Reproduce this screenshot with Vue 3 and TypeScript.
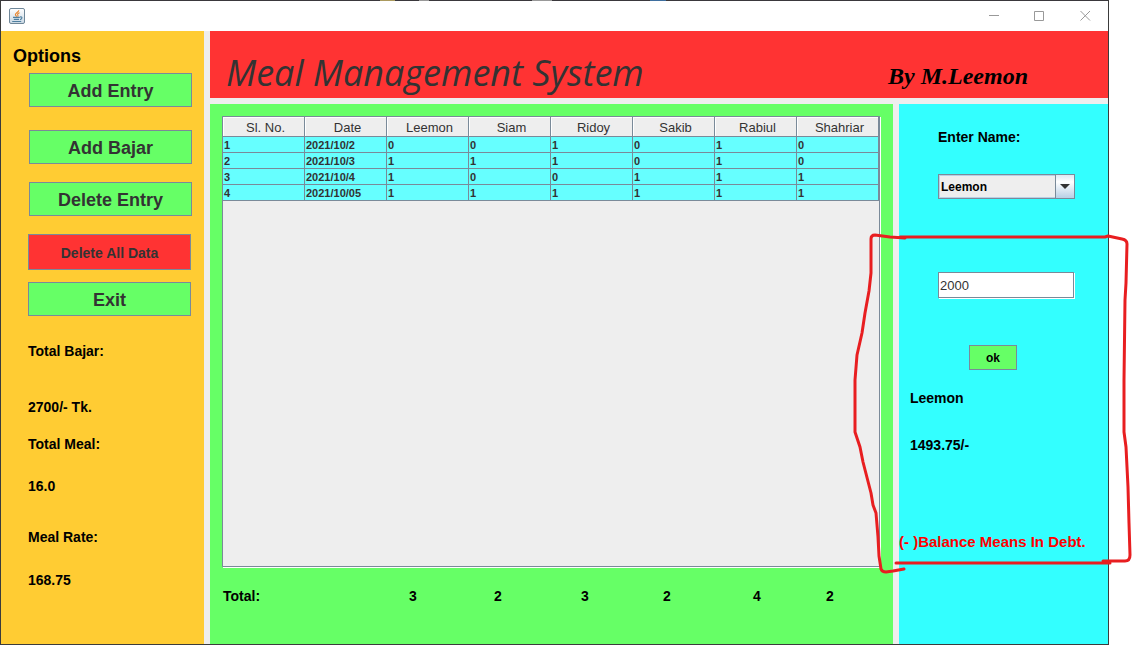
<script setup lang="ts">
import { ref } from 'vue'

const columns: string[] = ['Sl. No.', 'Date', 'Leemon', 'Siam', 'Ridoy', 'Sakib', 'Rabiul', 'Shahriar']

const rows: string[][] = [
  ['1', '2021/10/2', '0', '0', '1', '0', '1', '0'],
  ['2', '2021/10/3', '1', '1', '1', '0', '1', '0'],
  ['3', '2021/10/4', '1', '0', '0', '1', '1', '1'],
  ['4', '2021/10/05', '1', '1', '1', '1', '1', '1'],
]

const totals: number[] = [3, 2, 3, 2, 4, 2]
const members = columns.slice(2)

const member = ref('Leemon')
const amount = ref('2000')
</script>

<template>
  <div class="page">
    <div class="window">
      <div class="edge"></div>
      <header class="titlebar">
        <svg class="java" viewBox="0 0 16 16" aria-hidden="true">
          <defs>
            <linearGradient id="tile" x1="0" y1="0" x2="0" y2="1">
              <stop offset="0" stop-color="#ffffff" />
              <stop offset="1" stop-color="#c9d8e4" />
            </linearGradient>
          </defs>
          <rect x="0.5" y="0.5" width="15" height="15" rx="1.5" fill="url(#tile)" stroke="#6f8799" />
          <path d="M9.8 2.3C10 4 6.2 5 6.4 6.6C6.5 7.5 7.5 7.8 7.6 8.7M10.6 4.8C8.6 5.4 8.2 6.2 8.9 7.2C9.2 7.7 9 8.2 8.6 8.7" fill="none" stroke="#e8842c" stroke-width="1.1" />
          <path d="M4 9.4H10.8M4.8 11.4H10M11 9C13.6 8.4 13.6 11 11 11.6M3.2 13.5H12.2" fill="none" stroke="#4f7f9f" stroke-width="1.1" />
        </svg>
        <div class="controls">
          <button type="button" aria-label="Minimize">
            <svg viewBox="0 0 11 11"><path d="M1 4.5H11" /></svg>
          </button>
          <button type="button" aria-label="Maximize">
            <svg viewBox="0 0 11 11"><path d="M0.5 0.5H9.5V9.5H0.5Z" /></svg>
          </button>
          <button type="button" aria-label="Close">
            <svg viewBox="0 0 11 11"><path d="M0.5 0L10 9.5M10 0L0.5 9.5" /></svg>
          </button>
        </div>
      </header>

      <div class="body">
        <aside class="sidebar">
          <h2>Options</h2>
          <nav class="actions">
            <button type="button" class="entry first">Add Entry</button>
            <button type="button" class="entry">Add Bajar</button>
            <button type="button" class="entry">Delete Entry</button>
            <button type="button" class="danger">Delete All Data</button>
            <button type="button">Exit</button>
          </nav>
          <dl class="stats">
            <dt>Total Bajar:</dt>
            <dd>2700/- Tk.</dd>
            <dt>Total Meal:</dt>
            <dd>16.0</dd>
            <dt>Meal Rate:</dt>
            <dd>168.75</dd>
          </dl>
        </aside>

        <main class="main">
          <div class="banner">
            <h1>Meal Management System</h1>
            <p>By M.Leemon</p>
          </div>

          <div class="panels">
            <section class="sheet">
              <div class="pane">
                <table>
                  <thead>
                    <tr>
                      <th v-for="name in columns" :key="name" scope="col">{{ name }}</th>
                    </tr>
                  </thead>
                  <tbody>
                    <tr v-for="row in rows" :key="row[0]">
                      <td v-for="(cell, i) in row" :key="i">{{ cell }}</td>
                    </tr>
                  </tbody>
                </table>
              </div>
              <div class="totals">
                <span>Total:</span>
                <span v-for="(total, i) in totals" :key="i">{{ total }}</span>
              </div>
            </section>

            <form class="balance" @submit.prevent>
              <label for="member">Enter Name:</label>
              <div class="combo">
                <select id="member" v-model="member">
                  <option v-for="name in members" :key="name">{{ name }}</option>
                </select>
                <span class="arrow" aria-hidden="true">
                  <svg viewBox="0 0 10 5"><path d="M0 0H10L5 5Z" /></svg>
                </span>
              </div>
              <input v-model="amount" type="text" aria-label="Amount" />
              <button type="submit">ok</button>
              <output class="who" for="member">Leemon</output>
              <output class="sum">1493.75/-</output>
              <p class="note">(- )Balance Means In Debt.</p>
            </form>
          </div>
        </main>
      </div>
    </div>

    <svg class="marker" viewBox="0 0 1132 645" preserveAspectRatio="none" aria-hidden="true">
      <path d="M905 238L890 237L875 235Q871 235 871 239L871 273L869 291L865 313L862 333L857 355L855 380L855 432L860 447L863 462L871 493L873 505L876 513L878 537L879 556L881 569Q882 572 886 572L893 571L904 569" />
      <path d="M900 237H1105L1108 236L1122 239Q1127 240 1127 244L1126 283L1125 300L1124 380L1124 432L1126 447L1128 487L1129 523L1130 555Q1130 561 1125 561H1103" />
      <path d="M896 563H1110" />
    </svg>
  </div>
</template>

<style>
body {
  margin: 0;
  background: #fff;
}
</style>

<style scoped>
.page {
  position: relative;
  box-sizing: border-box;
  display: flex;
  min-height: 100vh;
  padding-right: 23px;
  font-family: "Liberation Sans", Arial, sans-serif;
  font-size: 14px;
  line-height: 20px;
  font-weight: bold;
  color: #000;
}

h1, h2, p, dl, dd {
  margin: 0;
}

button, select, input {
  box-sizing: border-box;
  font: inherit;
  border-radius: 0;
}

.window {
  flex: 1;
  min-width: 0;
  display: flex;
  flex-direction: column;
  border: 1px solid #3b3b3b;
  border-top: 0;
  background: #eee;
}

.edge {
  height: 1px;
  background: linear-gradient(90deg, #3a383c 379px, #ab9a5e 379px 394px, #3a383c 394px 418px, #999 418px 428px, #3a383c 428px 531px, #999 531px 551px, #3a383c 551px 649px, #3f6f9f 649px 665px, #3a383c 665px);
}

.titlebar {
  display: flex;
  align-items: center;
  justify-content: space-between;
  height: 30px;
  padding-left: 8px;
  background: #fff;
}

.java {
  width: 16px;
  height: 16px;
}

.controls {
  display: flex;
}

.controls button {
  display: flex;
  align-items: center;
  justify-content: center;
  width: 46px;
  height: 30px;
  padding: 0;
  border: 0;
  background: none;
}

.controls svg {
  width: 11px;
  height: 11px;
  fill: none;
  stroke: #999;
}

.body {
  flex: 1;
  display: flex;
  gap: 6px;
}

.sidebar {
  box-sizing: border-box;
  width: 203px;
  padding: 14px 12px;
  background: #fc3;
}

.sidebar h2 {
  font-size: 18px;
  line-height: 22px;
}

.actions {
  display: flex;
  flex-direction: column;
  align-items: flex-start;
  gap: 18px;
  padding: 6px 0 0 15px;
}

.actions button {
  width: 163px;
  height: 34px;
  padding: 2px 0 0;
  border: 1px solid #7a8a99;
  background: #6f6;
  color: #333;
  font-size: 18px;
}

.actions .entry {
  margin-left: 1px;
}

.actions .first {
  margin-bottom: 5px;
}

.actions .danger {
  height: 36px;
  margin-bottom: -6px;
  background: #f33;
  font-size: 14px;
}

.stats {
  display: grid;
  grid-template-rows: 56px 37px 42px 51px 43px 20px;
  padding: 25px 0 0 15px;
}

.main {
  flex: 1;
  min-width: 0;
  display: flex;
  flex-direction: column;
  gap: 6px;
}

.banner {
  box-sizing: border-box;
  display: flex;
  justify-content: space-between;
  align-items: center;
  height: 67px;
  padding: 16px 80px 0 16px;
  background: #f33;
}

.banner h1 {
  font-family: "Tempus Sans ITC", "Open Sans", sans-serif;
  font-size: 36px;
  line-height: 48px;
  font-weight: 400;
  font-style: italic;
  color: #333;
  white-space: nowrap;
}

.banner p {
  padding-top: 6px;
  font-family: "Blackadder ITC", "Liberation Serif", serif;
  font-size: 24px;
  line-height: 32px;
  font-style: italic;
  white-space: nowrap;
}

.panels {
  flex: 1;
  display: flex;
  gap: 6px;
}

.sheet {
  flex: 1;
  min-width: 0;
  display: flex;
  flex-direction: column;
  padding: 12px 12px 0;
  background: #6f6;
}

.pane {
  flex: 1;
  margin: 0 1px 1px 0;
  border: 1px solid #7a8a99;
  box-shadow: 1px 1px #fff;
  background: #eee;
}

table {
  width: 100%;
  table-layout: fixed;
  border-collapse: separate;
  border-spacing: 0;
}

th, td {
  box-sizing: border-box;
  border: solid #7a8a99;
  border-width: 0 1px 1px 0;
}

th {
  height: 20px;
  padding: 2px 0 0 4px;
  background: #eee;
  box-shadow: inset 1px 1px #fff;
  color: #333;
  font-size: 13px;
  line-height: 16px;
  font-weight: 400;
}

td {
  height: 16px;
  padding: 1px 1px 0;
  background: #6ff;
  color: #333;
  font-size: 11px;
  line-height: 14px;
}

.totals {
  display: grid;
  grid-template-columns: 186fr 85fr 87fr 82fr 90fr 73fr 55fr;
  padding: 18px 0 38px 1px;
}

.balance {
  box-sizing: border-box;
  width: 209px;
  display: flex;
  flex-direction: column;
  align-items: flex-start;
  padding-top: 23px;
  background: #3ff;
}

.balance label,
.combo,
.balance input {
  margin-left: 39px;
}

.combo {
  position: relative;
  width: 137px;
  height: 25px;
  margin-top: 27px;
}

.combo select {
  appearance: none;
  width: 100%;
  height: 100%;
  padding: 0 22px 0 2px;
  border: 1px solid #7a8a99;
  background: #eee;
  box-shadow: inset 1px 1px #b8cfe5, inset 0 -1px #b8cfe5;
  color: #000;
  font-size: 12px;
}

.arrow {
  position: absolute;
  top: 1px;
  right: 1px;
  bottom: 1px;
  width: 18px;
  display: flex;
  align-items: center;
  justify-content: center;
  border-left: 1px solid #7a8a99;
  background: linear-gradient(#dde8f3, #fff 30%, #b8cfe5);
  pointer-events: none;
}

.arrow svg {
  width: 10px;
  height: 5px;
  fill: #333;
}

.balance input {
  width: 136px;
  height: 26px;
  margin-top: 73px;
  padding: 0 1px;
  border: 1px solid #7a8a99;
  background: #fff;
  box-shadow: 1px 1px #fff;
  color: #333;
  font-size: 13px;
  font-weight: 400;
}

.balance button {
  width: 48px;
  height: 25px;
  margin: 47px 0 0 70px;
  padding: 0;
  border: 1px solid #7a8a99;
  background: #6f6;
  color: #000;
  font-size: 12px;
}

.who,
.sum {
  margin-left: 11px;
}

.who {
  margin-top: 18px;
}

.sum {
  margin-top: 27px;
}

.note {
  margin-top: 77px;
  color: #f00;
  font-size: 15px;
  white-space: nowrap;
}

.marker {
  position: absolute;
  inset: 0;
  width: 100%;
  height: 100%;
  fill: none;
  stroke: #e81e20;
  stroke-width: 3;
  stroke-linecap: round;
  stroke-linejoin: round;
  pointer-events: none;
}
</style>
